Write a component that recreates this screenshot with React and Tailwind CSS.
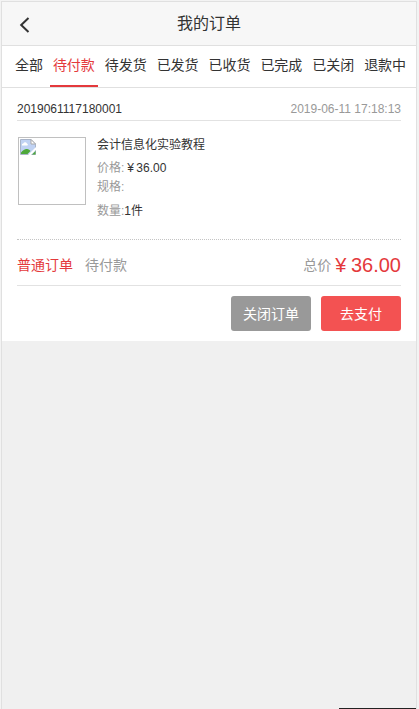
import React, { useState } from 'react'

const tabs = ['全部', '待付款', '待发货', '已发货', '已收货', '已完成', '已关闭', '退款中']

const order = {
  orderNo: '2019061117180001',
  createdAt: '2019-06-11 17:18:13',
  title: '会计信息化实验教程',
  price: '36.00',
  count: 1,
  type: '普通订单',
  status: '待付款',
  total: '36.00',
}

function BrokenImage() {
  return (
    <div className="h-[68px] w-[68px] shrink-0 border border-[#c0c0c0] p-px">
      <svg width="16" height="16" viewBox="0 0 16 16">
        <path d="M0.5 0.5H11L15.5 5V15.5H0.5Z" fill="#c0d2f3" stroke="#a9b4c8" />
        <path d="M11 0.5V5H15.5Z" fill="#fff" stroke="#a8a8a8" />
        <path d="M2 6.5a1.5 1.5 0 0 1 1.3-2 2 2 0 0 1 3.6 0 1.3 1.3 0 0 1 .6 2Z" fill="#fff" />
        <path d="M1 15v-1.5C3 11 5 9.800 7 10c1.500 0 2.800 1 3.500 2L7.500 15Z" fill="#4ea83a" />
        <path d="M8 16L16 8v2.800L11 16Z" fill="#fff" />
        <path d="M12 15.500L15.500 12v3.500Z" fill="#4ea83a" />
      </svg>
    </div>
  )
}

function OrderCard({ order }) {
  return (
    <section className="h-[253px] bg-white px-[15px]">
      <div className="flex h-[33px] items-center justify-between border-b border-[#e2e2e2] pt-[9px] text-xs">
        <span className="text-[#333]">{order.orderNo}</span>
        <span className="text-[#999]">{order.createdAt}</span>
      </div>

      <div className="flex h-[119px] border-b border-dotted border-[#c4c4c4] pt-4 pl-px text-xs text-[#333]">
        <BrokenImage />
        <div className="-mt-px ml-[11px]">
          <p className="mb-[5px] h-[18px] leading-[18px]">{order.title}</p>
          <p className="h-[19px] leading-[19px]">
            <span className="text-[#999]">价格:</span>
            <span className="ml-[3px] tracking-[-0.5px]">¥ </span>
            {order.price}
          </p>
          <p className="mb-[5px] h-[19px] leading-[19px]"><span className="text-[#999]">规格:</span></p>
          <p className="h-[19px] leading-[19px]"><span className="text-[#999]">数量:</span>{order.count}件</p>
        </div>
      </div>

      <div className="flex h-[46px] items-center border-b border-[#e2e2e2] pt-[5px] text-sm text-[#999]">
        <span className="text-[#e4393c]">{order.type}</span>
        <span className="ml-3">{order.status}</span>
        <span className="ml-auto">总价</span>
        <span className="ml-1 text-xl text-[#e4393c]"><span className="tracking-[-0.5px]">¥ </span>{order.total}</span>
      </div>

      <div className="flex justify-end gap-2.5 pt-2.5 text-sm text-white">
        <button className="h-[35px] w-20 rounded-[3px] bg-[#999]">关闭订单</button>
        <button className="h-[35px] w-20 rounded-[3px] bg-[#f35252]">去支付</button>
      </div>
    </section>
  )
}

export default function App() {
  const [active, setActive] = useState('待付款')

  return (
    <div className="h-[709px] w-[419px] overflow-hidden bg-[#f3f3f3] pt-px pl-px font-['Liberation_Sans','Noto_Sans_CJK_SC',sans-serif] font-normal">
      <div className="flex h-[708px] w-[416px] flex-col border-x border-t border-[#e0e0e0] bg-[#f0f0f0]">
        <header className="flex h-11 shrink-0 items-center border-b border-[#e0e0e0] bg-[#f7f7f7] text-base text-[#333]">
          <button className="w-10 pt-[3px] pl-4">
            <svg width="12" height="16" viewBox="0 0 12 16" fill="none" stroke="#333" strokeWidth="2">
              <path d="M10.500 1L3.200 8L10.500 15" />
            </svg>
          </button>
          <h1 className="flex-1 pr-10 text-center">我的订单</h1>
        </header>

        <nav className="flex h-[42px] shrink-0 gap-[3.890px] border-b border-[#e0e0e0] bg-white pl-2.5 text-sm text-[#333]">
          {tabs.map((tab) => (
            <button
              key={tab}
              onClick={() => setActive(tab)}
              className={`h-[41px] shrink-0 border-b-2 px-[3px] pb-0.5 whitespace-nowrap ${tab === active ? 'border-[#e4393c] text-[#e4393c]' : 'border-transparent'}`}
            >
              {tab}
            </button>
          ))}
        </nav>

        <OrderCard order={order} />
        <div className="mt-auto h-px w-[77px] self-end bg-[#222]" />
      </div>
    </div>
  )
}
